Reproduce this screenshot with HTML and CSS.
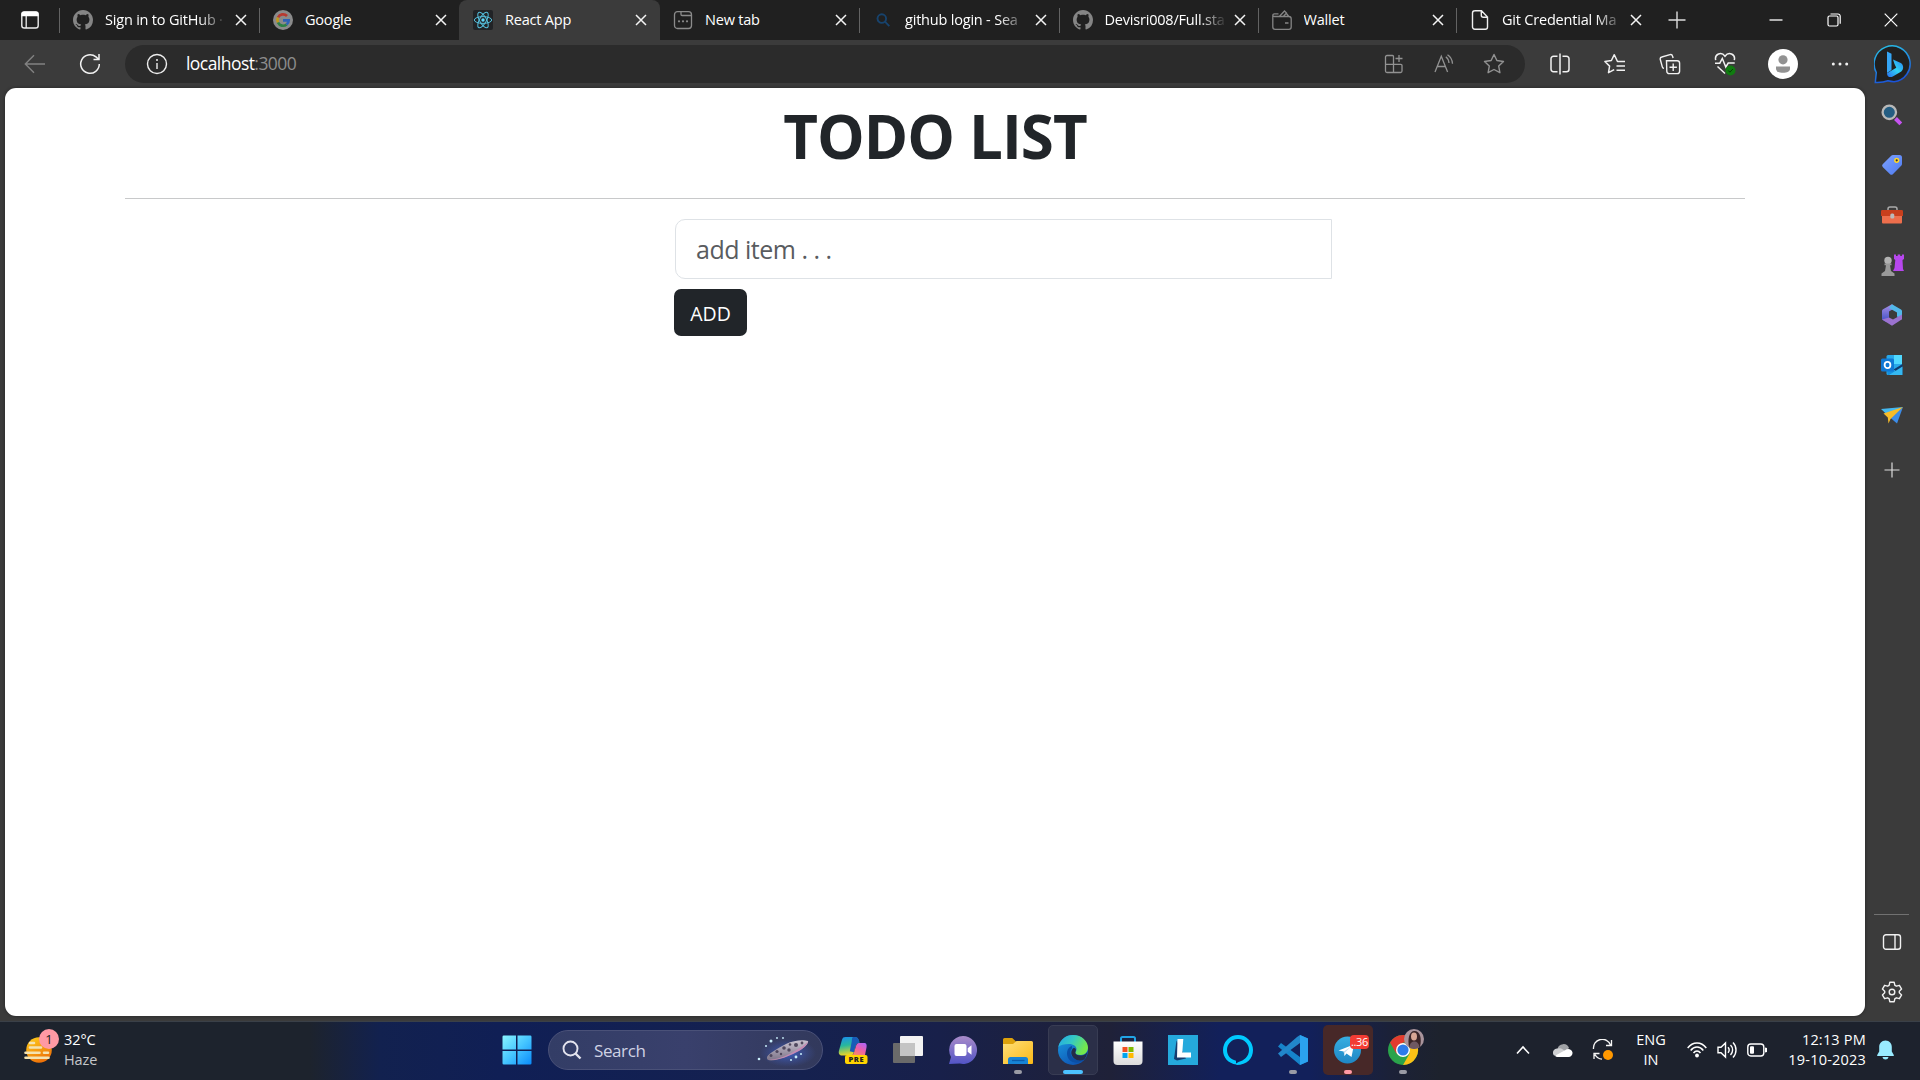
FILE: index.html
```html
<!DOCTYPE html>
<html lang="en">
<head>
<meta charset="utf-8">
<title>React App</title>
<link rel="stylesheet" href="styles.css">
</head>
<body>
<svg class="defs" aria-hidden="true">
  <defs>
    <linearGradient id="g-win" x1="0" y1="0" x2="1" y2="1"><stop offset="0" stop-color="#8af5ff"/><stop offset=".5" stop-color="#46c6ff"/><stop offset="1" stop-color="#0a8bfb"/></linearGradient>
    <linearGradient id="g-bing" x1="1" y1="0" x2="0" y2="1"><stop offset="0" stop-color="#2a7ff0"/><stop offset=".5" stop-color="#2fd3f5"/><stop offset="1" stop-color="#2a6df0"/></linearGradient>
    <linearGradient id="g-ring" x1="0.3" y1="0" x2="0.6" y2="1"><stop offset="0" stop-color="#27bce6"/><stop offset="1" stop-color="#1b50d8"/></linearGradient>
    <linearGradient id="g-tag" x1="0" y1="0" x2="1" y2="1"><stop offset="0" stop-color="#7ea2ff"/><stop offset="1" stop-color="#4d7af0"/></linearGradient>
    <linearGradient id="g-chat" x1="0" y1="0" x2="0" y2="1"><stop offset="0" stop-color="#a98bc9"/><stop offset="1" stop-color="#5254c6"/></linearGradient>
    <linearGradient id="g-folder" x1="0" y1="0" x2="1" y2="1"><stop offset="0" stop-color="#ffe07a"/><stop offset="1" stop-color="#fbb916"/></linearGradient>
    <linearGradient id="g-edge1" x1="0" y1="0" x2="1" y2="0.4"><stop offset="0" stop-color="#22a7e8"/><stop offset=".5" stop-color="#35c9c3"/><stop offset="1" stop-color="#74e84b"/></linearGradient>
    <linearGradient id="g-edge2" x1="0" y1="0" x2="0.6" y2="1"><stop offset="0" stop-color="#1b9de2"/><stop offset="1" stop-color="#0e55b4"/></linearGradient>
    <linearGradient id="g-sun" x1="0" y1="0" x2="0.5" y2="1"><stop offset="0" stop-color="#ffd21c"/><stop offset="1" stop-color="#ee7208"/></linearGradient>
    <linearGradient id="g-cop1" x1="0" y1="0" x2="0.2" y2="1"><stop offset="0" stop-color="#1a8df0"/><stop offset=".5" stop-color="#28b89c"/><stop offset="1" stop-color="#e9d52a"/></linearGradient>
    <linearGradient id="g-cop2" x1="0.8" y1="0" x2="0.2" y2="1"><stop offset="0" stop-color="#b264f3"/><stop offset=".5" stop-color="#ec5fa8"/><stop offset="1" stop-color="#f98a60"/></linearGradient>
    <linearGradient id="g-tel" x1="0" y1="0" x2="0" y2="1"><stop offset="0" stop-color="#37aee2"/><stop offset="1" stop-color="#1e86c4"/></linearGradient>
    <linearGradient id="g-365" x1="0" y1="0" x2="0" y2="1"><stop offset="0" stop-color="#a98fe6"/><stop offset="1" stop-color="#3c4fc4"/></linearGradient>
    <linearGradient id="g-ship" x1="0" y1="0" x2="0" y2="1"><stop offset="0" stop-color="#c9c3d0"/><stop offset="1" stop-color="#7d7488"/></linearGradient>
    <radialGradient id="g-glow"><stop offset="0" stop-color="#3f6ae0" stop-opacity=".75"/><stop offset="1" stop-color="#4560c0" stop-opacity="0"/></radialGradient>
    <linearGradient id="g-store" x1="0" y1="0" x2="0" y2="1"><stop offset="0" stop-color="#fff"/><stop offset="1" stop-color="#dcdcdc"/></linearGradient>
    <symbol id="x" viewBox="0 0 12 12"><path d="M1 1l10 10M11 1L1 11" fill="none" stroke="#f4f4f4" stroke-width="1.5"/></symbol>
    <symbol id="github" viewBox="0 0 16 16"><path fill="#858585" d="M8 0C3.58 0 0 3.58 0 8c0 3.54 2.29 6.53 5.47 7.59.4.07.55-.17.55-.38 0-.19-.01-.82-.01-1.49-2.01.37-2.53-.49-2.69-.94-.09-.23-.48-.94-.82-1.13-.28-.15-.68-.52-.01-.53.63-.01 1.08.58 1.23.82.72 1.21 1.87.87 2.33.66.07-.52.28-.87.51-1.07-1.78-.2-3.64-.89-3.64-3.95 0-.87.31-1.59.82-2.15-.08-.2-.36-1.02.08-2.12 0 0 .67-.21 2.2.82.64-.18 1.32-.27 2-.27s1.36.09 2 .27c1.53-1.04 2.2-.82 2.2-.82.44 1.1.16 1.92.08 2.12.51.56.82 1.27.82 2.15 0 3.07-1.87 3.75-3.65 3.95.29.25.54.73.54 1.48 0 1.07-.01 1.93-.01 2.2 0 .21.15.46.55.38A8.01 8.01 0 0 0 16 8c0-4.42-3.58-8-8-8z"/></symbol>
  </defs>
</svg>

<header class="tabstrip">
  <div class="tab-actions"><svg width="20" height="20" viewBox="0 0 20 20"><rect x="1.8" y="2" width="16.4" height="16" rx="2.6" fill="none" stroke="#eee" stroke-width="1.4"/><path d="M1.5 6.3V4A2.5 2.5 0 0 1 4 1.5h12A2.5 2.5 0 0 1 18.500 4v2.300z" fill="#fff"/><path d="M6.200 6v12" stroke="#eee" stroke-width="1.300"/></svg></div>
  <nav class="tabs">
    <div class="tab divided"><svg class="fav" viewBox="0 0 20 20"><use href="#github"/></svg><span class="tab-title fade">Sign in to GitHub ·</span><svg class="close"><use href="#x"/></svg></div>
    <div class="tab divided"><svg class="fav" viewBox="0 0 20 20"><circle cx="10" cy="10" r="10" fill="#8b8b8b"/><g fill="none" stroke-width="2.700"><path d="M14 6a5.600 5.600 0 0 0-9 1.500" stroke="#b83a31"/><path d="M5 7.500a5.600 5.600 0 0 0 0 5" stroke="#c19a1c"/><path d="M5 12.500a5.600 5.600 0 0 0 8.600 2" stroke="#2c8145"/><path d="M13.600 14.500c1.500-1.100 2.100-2.500 2.100-4.200H10" stroke="#2e62b8"/></g></svg><span class="tab-title">Google</span><svg class="close"><use href="#x"/></svg></div>
    <div class="tab active"><svg class="fav" viewBox="0 0 20 20"><rect width="20" height="20" rx="2" fill="#212326"/><g fill="none" stroke="#55bfdc" stroke-width="1"><ellipse cx="10" cy="10" rx="8.700" ry="3.400"/><ellipse cx="10" cy="10" rx="8.700" ry="3.400" transform="rotate(60 10 10)"/><ellipse cx="10" cy="10" rx="8.700" ry="3.400" transform="rotate(120 10 10)"/></g><circle cx="10" cy="10" r="1.700" fill="#61dafb"/></svg><span class="tab-title">React App</span><svg class="close"><use href="#x"/></svg></div>
    <div class="tab"><svg class="fav" viewBox="0 0 20 20"><g fill="none" stroke="#8b8b8b" stroke-width="1.300"><rect x="1.500" y="1.700" width="17" height="16.800" rx="3"/><path d="M8 2v2.500a1 1 0 0 0 1 1h9"/></g><g fill="#8b8b8b"><circle cx="6" cy="11.300" r="1.100"/><circle cx="10" cy="11.300" r="1.100"/><circle cx="14" cy="11.300" r="1.100"/></g></svg><span class="tab-title">New tab</span><svg class="close"><use href="#x"/></svg></div>
    <div class="tab divided"><svg class="fav" viewBox="0 0 20 20"><g fill="none" stroke="#17436d" stroke-width="1.900"><circle cx="8.800" cy="8.600" r="4.300"/><path d="M12 11.700l4.300 4.400"/></g></svg><span class="tab-title fade">github login - Sea</span><svg class="close"><use href="#x"/></svg></div>
    <div class="tab divided"><svg class="fav" viewBox="0 0 20 20"><use href="#github"/></svg><span class="tab-title fade">Devisri008/Full.sta</span><svg class="close"><use href="#x"/></svg></div>
    <div class="tab divided"><svg class="fav" viewBox="0 0 20 20"><g fill="none" stroke="#858585" stroke-width="1.300"><path d="M.8 5.500V17a2.300 2.300 0 0 0 2.300 2.300h13.800a2.300 2.300 0 0 0 2.300-2.300V8.800a2.300 2.300 0 0 0-2.300-2.300H2.500C.3 6.500.3 3.800 2.500 3.800h4M13 13h3.500M7.500 6.300l5-5.300 2 2-3 3.300M14 3l2.500 3"/></g></svg><span class="tab-title">Wallet</span><svg class="close"><use href="#x"/></svg></div>
    <div class="tab divided"><svg class="fav" viewBox="0 0 20 20"><path d="M4.500.8h7L17.500 7v10a2.200 2.200 0 0 1-2.200 2.200H4.700A2.200 2.200 0 0 1 2.500 17V3A2.200 2.200 0 0 1 4.700.8zM11.300 1v4.200c0 1.200.8 2 2 2h4" fill="none" stroke="#eee" stroke-width="1.400"/></svg><span class="tab-title fade">Git Credential Ma</span><svg class="close"><use href="#x"/></svg></div>
  </nav>
  <div class="new-tab"><svg width="18" height="18" viewBox="0 0 18 18"><path d="M9 .5v17M.5 9h17" stroke="#ddd" stroke-width="1.400"/></svg></div>
  <div class="window-controls">
    <div><svg width="14" height="14" viewBox="0 0 14 14"><path d="M.5 7h13" stroke="#fff" stroke-width="1.300"/></svg></div>
    <div><svg width="14" height="14" viewBox="0 0 14 14"><g fill="none" stroke="#fff" stroke-width="1.200"><rect x="1" y="3" width="10" height="10" rx="1.500"/><path d="M3.500 1h7.500A2.200 2.200 0 0 1 13.200 3.200v7.500"/></g></svg></div>
    <div><svg width="14" height="14" viewBox="0 0 14 14"><path d="M.7.7l12.600 12.600M13.300.7L.7 13.300" stroke="#fff" stroke-width="1.200"/></svg></div>
  </div>
</header>

<div class="toolbar">
  <div class="tool"><svg width="22" height="20" viewBox="0 0 22 20"><path d="M21 10H1.500M10 1.300L1.300 10l8.700 8.700" fill="none" stroke="#828282" stroke-width="1.400"/></svg></div>
  <div class="tool"><svg width="22" height="22" viewBox="0 0 22 22"><path d="M20.300 11A9.300 9.300 0 1 1 17 3.900l2.600 2.300M20 1v5.500h-5.500" fill="none" stroke="#f1f1f1" stroke-width="1.500"/></svg></div>
  <div class="address">
    <svg class="info" width="22" height="22" viewBox="0 0 22 22"><circle cx="11" cy="11" r="9.500" fill="none" stroke="#eee" stroke-width="1.400"/><path d="M11 10v6" stroke="#eee" stroke-width="1.400"/><circle cx="11" cy="7" r="1" fill="#eee"/></svg>
    <div class="url">localhost<span>:3000</span></div>
    <div class="pill-tool"><svg width="20" height="20" viewBox="0 0 20 20"><path d="M9.500 18.500V2.500a1 1 0 0 0-1-1H3a1.500 1.500 0 0 0-1.500 1.500v14A1.500 1.500 0 0 0 3 18.500h13.500A1.500 1.500 0 0 0 18 17v-5.500a1.200 1.200 0 0 0-1.200-1.200H1.500M15 1v7M11.500 4.500h7" fill="none" stroke="#929292" stroke-width="1.300"/></svg></div>
    <div class="pill-tool"><svg width="20" height="20" viewBox="0 0 20 20"><path d="M1 18L7.300 2.300 13.600 18M3.200 12.500h8.200M11.800 2.700c2 1.500 3 3.700 3.200 6.300M13.500.8c3 2 4.800 5 5 9" fill="none" stroke="#929292" stroke-width="1.300"/></svg></div>
    <div class="pill-tool"><svg width="22" height="22" viewBox="0 0 22 22"><path d="M11 1.500l2.900 6 6.600 1-4.800 4.600 1.200 6.600-5.900-3.200-5.900 3.200 1.200-6.600L1.500 8.500l6.600-1z" fill="none" stroke="#929292" stroke-width="1.400" stroke-linejoin="round"/></svg></div>
  </div>
  <div class="tool"><svg width="20" height="22" viewBox="0 0 20 22"><path d="M10 .5v21M7.500 3.200h-4A2.500 2.500 0 0 0 1 5.700v10.600a2.500 2.500 0 0 0 2.500 2.500h4M12.500 3.200h4A2.500 2.500 0 0 1 19 5.700v10.600a2.500 2.500 0 0 1-2.500 2.500h-4" fill="none" stroke="#f1f1f1" stroke-width="1.500"/></svg></div>
  <div class="tool"><svg width="22" height="22" viewBox="0 0 22 22"><path d="M21 8.500h-7.500L10.300 1.700 7.400 7.500.9 8.500l4.700 4.600-1.100 6.600 5.700-3M12.500 13H21M12.500 17.300H21" fill="none" stroke="#f1f1f1" stroke-width="1.500" stroke-linejoin="round"/></svg></div>
  <div class="tool"><svg width="22" height="22" viewBox="0 0 22 22"><path d="M7.500 7.800h10.700a2.400 2.400 0 0 1 2.400 2.400v8a2.400 2.400 0 0 1-2.400 2.400h-8a2.400 2.400 0 0 1-2.400-2.400zM14.200 10.500v7.400M10.500 14.200h7.400M5 15.300c-.9 0-1.500-.5-1.700-1.400L1.300 6.500c-.3-1.200.3-2.200 1.500-2.500L11 1.600c1.200-.3 2.200.2 2.500 1.400l.6 2" fill="none" stroke="#f1f1f1" stroke-width="1.400"/></svg></div>
  <div class="tool"><svg width="22" height="24" viewBox="0 0 22 24"><path d="M1.700 8.200C.2 1.700 7.500-.5 11 4.200 14.500-.5 21.800 1.700 20.300 8.200M1 11.200h4.800l2.500-4.700 3.500 8.500 2.400-4h6.500M3.500 14.500l7.500 7" fill="none" stroke="#f1f1f1" stroke-width="1.500"/><circle cx="16.500" cy="18.500" r="5" fill="#107c10"/><path d="M14.300 18.500l1.600 1.700 3-3.200" fill="none" stroke="#063c06" stroke-width="1"/></svg></div>
  <div class="tool avatar-cell"><svg width="30" height="30" viewBox="0 0 30 30"><circle cx="15" cy="15" r="15" fill="#fff"/><circle cx="15" cy="10.800" r="4.600" fill="#929292"/><path d="M8 17.500h14v2.200c0 2.800-3 4-7 4s-7-1.200-7-4z" fill="#929292"/></svg></div>
  <div class="tool dots"><svg width="18" height="6" viewBox="0 0 18 6"><g fill="#f1f1f1"><circle cx="2.300" cy="3" r="1.500"/><circle cx="9" cy="3" r="1.500"/><circle cx="15.700" cy="3" r="1.500"/></g></svg></div>
  <div class="tool bing"><svg width="40" height="40" viewBox="0 0 40 40"><path d="M1.300 38.500l1-10A18 18 0 1 1 20 37.800a40 40 0 0 1-6-1c-4 1.600-8 1.900-12.700 1.700z" fill="#202020" stroke="url(#g-ring)" stroke-width="1.500"/><path d="M13 7.500l4.500 2.300V26L13 29z" fill="#35a5f5"/><path d="M19 15.500l7.800 3.500c3 2 3.200 6 .5 8.500l-8.500 5c-2.800 1.400-5.800.3-5.800-3.300l9.300-5.500-1.800-3.700z" fill="url(#g-bing)"/></svg></div>
</div>

<main class="browser-body">
  <section class="page">
    <div class="container">
      <h1>TODO LIST</h1>
      <hr>
      <form class="todo-form">
        <input type="text" placeholder="add item . . .">
        <button type="button">ADD</button>
      </form>
    </div>
  </section>
  <aside class="sidebar">
    <div class="side-item"><svg width="22" height="22" viewBox="0 0 22 22"><path d="M14.500 14.500l5.300 5.300" stroke="#c653f0" stroke-width="4"/><circle cx="8.300" cy="8.300" r="6.700" fill="#245d82" stroke="#b8b8b8" stroke-width="2.300"/></svg></div>
    <div class="side-item"><svg width="22" height="22" viewBox="0 0 22 22"><path d="M12 1h6.500A2.500 2.500 0 0 1 21 3.500V10c0 .7-.3 1.300-.8 1.800l-8.400 8.400a2 2 0 0 1-2.700 0L1.700 13a2 2 0 0 1 0-2.700l8.500-8.500c.5-.5 1.100-.8 1.800-.8z" fill="url(#g-tag)"/><circle cx="15.700" cy="6.300" r="2.600" fill="#ffd629"/><circle cx="15.700" cy="6.300" r="1.100" fill="#333"/></svg></div>
    <div class="side-item"><svg width="22" height="20" viewBox="0 0 22 20"><path d="M7 6V4a2 2 0 0 1 2-2h5a2 2 0 0 1 2 2v2" fill="none" stroke="#aaa" stroke-width="1.500"/><rect x="1" y="9" width="20" height="9.500" rx="1" fill="#ed6e4c"/><path d="M0 6.500C0 5.500.5 5 1.500 5h19c1 0 1.500.5 1.500 1.500V11H0z" fill="#c83f1d"/><rect x="9.300" y="8.500" width="4" height="5" rx="1.500" fill="#bbb"/></svg></div>
    <div class="side-item"><svg width="24" height="24" viewBox="0 0 24 24"><path d="M14 1.500h2V3h1.700V1.500h2.500V3h1.700V1.500H24V6l-1.500 1 .5 9 1 2H13l1.500-3 .8-8L14 6z" fill="#b747ee"/><circle cx="8" cy="7.500" r="3.700" fill="#b2b2b2"/><path d="M4.500 10.500h7v1.700H10l1 5.800 3.500 2.500V23H1.500v-2.500L5 18l1-5.800H4.500z" fill="#999"/></svg></div>
    <div class="side-item"><svg width="22" height="24" viewBox="0 0 22 24"><path d="M11 1.200L2 6.300A2 2 0 0 0 1 8v8.500l4 2.500 3-4V8.500l6-3.600z" fill="url(#g-365)"/><path d="M11 1.200l9 5.200a2 2 0 0 1 1 1.700v8.400l-5-3V9.500L8 5z" fill="#52b8ea"/><path d="M1 16.500l7-2 4 2 9-5v4.700L11 22.800z" fill="#9b72cf"/></svg></div>
    <div class="side-item"><svg width="22" height="22" viewBox="0 0 22 22"><rect x="5.500" y="1" width="15.500" height="20" rx="1.500" fill="#28a8ea"/><path d="M13 1h8v9h-8z" fill="#50d9ff"/><path d="M5 12l8.500 5L21 21H7z" fill="#1490df"/><path d="M21.500 10v11l-9-5.500z" fill="#123b6d"/><path d="M21.500 12.500V21H8z" fill="#35b8f1"/><rect x="0" y="4.500" width="13" height="13" rx="1.500" fill="#0f78d4"/><ellipse cx="6.500" cy="11" rx="2.900" ry="3.200" fill="none" stroke="#fff" stroke-width="1.800"/></svg></div>
    <div class="side-item"><svg width="24" height="20" viewBox="0 0 24 20"><path d="M1 4L23 2 8.500 11z" fill="#44b8f0"/><path d="M23 2L17 18.500l-7-6z" fill="#3c8ce8"/><path d="M23 2L3.500 8.500l4.300 4 .7 6 2-4.500z" fill="#f7bc29"/></svg></div>
    <div class="side-item add"><svg width="16" height="16" viewBox="0 0 16 16"><path d="M8 .5v15M.5 8h15" stroke="#ddd" stroke-width="1.200"/></svg></div>
    <div class="side-bottom">
      <div class="side-item"><svg width="20" height="20" viewBox="0 0 20 20"><path d="M4 2.800h12A2.500 2.500 0 0 1 18.500 5.300v9.400a2.500 2.500 0 0 1-2.500 2.500H4a2.500 2.500 0 0 1-2.500-2.500V5.300A2.500 2.500 0 0 1 4 2.800zM13 3v14" fill="none" stroke="#f1f1f1" stroke-width="1.400"/></svg></div>
      <div class="side-item"><svg width="22" height="22" viewBox="0 0 22 22"><path d="M8.800 1.300h4.400l.7 3 1.500.9 3-.9 2.200 3.800-2.300 2.100v1.600l2.300 2.100-2.200 3.800-3-.9-1.500.9-.7 3H8.800l-.7-3-1.500-.9-3 .9-2.200-3.800 2.300-2.100v-1.600L1.400 8.100l2.200-3.800 3 .9 1.500-.9z" fill="none" stroke="#f1f1f1" stroke-width="1.400" stroke-linejoin="round"/><circle cx="11" cy="11" r="2.800" fill="none" stroke="#f1f1f1" stroke-width="1.400"/></svg></div>
    </div>
  </aside>
</main>

<footer class="taskbar">
  <div class="weather">
    <div class="weather-icon"><svg width="32" height="32" viewBox="0 0 32 32"><circle cx="15" cy="16" r="12.800" fill="url(#g-sun)"/><path d="M6 9h4M6 13.500h11M1.500 18.700h14M20 18.700h4M1.500 23.700h23" stroke="#f4e3b1" stroke-width="2.600" stroke-linecap="round"/></svg><span class="weather-badge">1</span></div>
    <div class="weather-text">32°C<br><span>Haze</span></div>
  </div>
  <div class="apps">
    <div class="app"><svg width="30" height="30" viewBox="0 0 30 30"><path d="M1.800.5H14v14H.500V1.800A1.300 1.300 0 0 1 1.800.5zM15.500.5h12.700a1.300 1.300 0 0 1 1.300 1.300v12.700h-14zM.5 16H14v13.500H1.800a1.300 1.300 0 0 1-1.300-1.300zM15.500 16h14v12.200a1.300 1.300 0 0 1-1.300 1.300H15.500z" fill="url(#g-win)"/></svg></div>
    <div class="search"><svg class="search-icon" width="20" height="20" viewBox="0 0 20 20"><circle cx="8.500" cy="8.500" r="7" fill="none" stroke="#e3e3ee" stroke-width="1.900"/><path d="M13.500 13.500l5 5" stroke="#e3e3ee" stroke-width="2.400"/></svg><span>Search</span>
      <svg width="62" height="34" viewBox="0 0 62 34"><ellipse cx="34" cy="20" rx="28" ry="14" fill="url(#g-glow)"/><path d="M13 24c2-4 10-8 19-13 8-4.200 18-4.500 22-3 1 2-3 7-12 11-8 4-18 8.500-25 8.500-3 0-4.500-1-4-3.500z" fill="url(#g-ship)"/><path d="M14 26.500c7 .5 16-2 26-8 6-3.300 10-6 14-10-1 3.500-5 8-12 11-9 4.500-20 9-28 7z" fill="#c38bb4"/><g fill="#50485e"><circle cx="17" cy="22.500" r="1.500"/><circle cx="23" cy="18.500" r="1.600"/><circle cx="30" cy="15" r="1.800"/><circle cx="36" cy="11.500" r="1.300"/><circle cx="35" cy="17" r="1.700"/><circle cx="42" cy="12" r="2"/><circle cx="48" cy="10" r="1.400"/><circle cx="27" cy="21" r="1.200"/></g><g fill="#c9eefb"><circle cx="17" cy="8" r="1.500"/><circle cx="12" cy="13" r="1"/><circle cx="5" cy="26" r="1.300"/><circle cx="42" cy="24" r="1.400"/><circle cx="37" cy="27" r="1"/><circle cx="47" cy="21" r="1"/><circle cx="23" cy="5" r=".9"/><circle cx="29" cy="5" r=".9"/></g></svg>
    </div>
    <div class="app"><svg width="30" height="30" viewBox="0 0 30 30"><path d="M7.500 2h9c2.500 0 3.500 1 4.200 3l.8 2.500c-2 0-3 .8-3.700 2.800l-2.300 8.200c-.7 1.700-1.700 2-3.500 2H4c-3 0-3.700-2.500-3-5L4 4.800C4.700 2.700 5.500 2 7.500 2z" fill="url(#g-cop1)"/><path d="M15 2h1.500c2.500 0 3.500 1 4.200 3l.8 2.500c-2 0-3 .8-3.700 2.800l-2 7-4-1 2-10C14 4 14 2.500 15 2z" fill="#185bb8"/><path d="M21 8h5c2.500 0 3 2 2.500 4.500L27 20H13.500c1.500 0 2-1 2.500-2.500L18 11c.5-2 1.500-3 3-3z" fill="url(#g-cop2)"/><rect x="7" y="20" width="22.500" height="9" rx="2" fill="#ffd400"/><text x="18.300" y="27.300" class="pre">PRE</text></svg></div>
    <div class="app"><svg width="30" height="30" viewBox="0 0 30 30"><rect x="0" y="8" width="22" height="20" rx="1" fill="#6a6a6a"/><rect x="7" y="1" width="23" height="20" rx="1" fill="#f3f3f3"/><rect x="7" y="8" width="15" height="13" fill="#c4c4c4"/></svg></div>
    <div class="app"><svg width="30" height="30" viewBox="0 0 30 30"><path d="M15 1a14 14 0 1 1-3.300 27.600L1 29l2-7A14 14 0 0 1 15 1z" fill="url(#g-chat)"/><rect x="6.500" y="9" width="12" height="12" rx="2" fill="#fff"/><path d="M19.700 13.300l3.800-3v9.400l-3.800-3z" fill="#fff"/></svg></div>
    <div class="app running"><svg width="30" height="30" viewBox="0 0 30 30"><path d="M0 4.500A1.500 1.500 0 0 1 1.500 3h7.700L13 6.500V10H0z" fill="#dda10b"/><path d="M0 9h10l3.500-3h15A1.500 1.500 0 0 1 30 7.500V28a1 1 0 0 1-1 1H0z" fill="url(#g-folder)"/><path d="M5 29v-4.500A2.500 2.500 0 0 1 7.500 22h15a2.500 2.500 0 0 1 2.500 2.500V29z" fill="#1784d6"/><path d="M9 25.500h12.500" stroke="#0b5cab" stroke-width="1.300"/></svg></div>
    <div class="app selected"><svg width="30" height="30" viewBox="0 0 30 30"><circle cx="15" cy="15" r="15" fill="url(#g-edge2)"/><path d="M.3 12C2 4.500 8 0 15 0c9 0 15 6.500 15 12.500 0 4.500-3 7.500-7.200 7.500-3.500 0-5.500-1-5.500-2.300 0-1.200 1.200-1.200 1.200-3.700 0-2.500-3-5-7.500-5C6 9 2 10 .3 12z" fill="url(#g-edge1)"/><path d="M14 11c-5 1-7 9-2.500 14 4 3.800 11 3.500 14.800-.5-5 2-13 .3-13.800-6.500-.2-2 .3-3.500 1.500-4.500z" fill="#0b4fa5"/><path d="M17.300 17.500c0 2 3 3.500 6.500 3 3-.5 4.500-2 5.500-3.500a15 15 0 0 1-3 7.500c-6 2.500-12-.5-13-6-.3-2.500 1-4.500 2-5.300 1.500-.5 3 .5 2.500 2.300z" fill="#242c48"/></svg></div>
    <div class="app"><svg width="30" height="30" viewBox="0 0 30 30"><path d="M8 7V3.500C8 2.500 8.500 2 9.500 2h11c1 0 1.500.5 1.500 1.500V7" fill="none" stroke="#21a4e5" stroke-width="2"/><path d="M.5 6.500h29V26a4 4 0 0 1-4 4h-21a4 4 0 0 1-4-4z" fill="url(#g-store)"/><path d="M9.500 12h5v5h-5z" fill="#f25022"/><path d="M15.500 12h5v5h-5z" fill="#7fba00"/><path d="M9.500 18h5v5h-5z" fill="#00a4ef"/><path d="M15.500 18h5v5h-5z" fill="#ffb900"/></svg></div>
    <div class="app"><svg width="30" height="30" viewBox="0 0 30 30"><path d="M0 0h30v30H0z" fill="#25a9dc"/><path d="M8.500 5.500L6 24l3 1.500 9-2z" fill="#173d70"/><path d="M9.500 4h5.800l-1 13.500h8.700v5H9z" fill="#fff"/></svg></div>
    <div class="app"><svg width="30" height="30" viewBox="0 0 30 30"><path d="M13 28.500v-2.700c-5-1-9-4.500-9-10.300A11 11 0 0 1 26 15c0 7-5.500 11.500-12.500 14.500C5 28.500 0 22.500 0 15a15 15 0 1 1 30 0c0 8.500-6 15-16.500 15z" fill="#00caff"/><path d="M13 28.500v-2.800C7.500 24.500 4 20.500 4 15a11 11 0 0 1 22 0c0 6.500-5 10.500-10.500 12z" fill="#13215a"/></svg></div>
    <div class="app running"><svg width="30" height="30" viewBox="0 0 30 30"><path d="M22 0l8 3.500v23L22 30 0 11.500 3 8l19 14z" fill="#1683ca"/><path d="M22 0l-3 2L0 18.500 3 22 22 8z" fill="#2286ca"/><path d="M22 0l8 3.500v23L22 30z" fill="#2ba2ef"/></svg></div>
    <div class="app running alert"><svg width="30" height="30" viewBox="0 0 30 30"><circle cx="14.500" cy="15" r="13.500" fill="url(#g-tel)"/><path d="M5.500 15.500L21 9.500 18.500 22l-5-3.500-2 2.500-.8-4.500z" fill="#fff"/><path d="M10.700 16.500l7.500-5-6 5.800-.7 3.700z" fill="#c5dff0"/></svg><span class="count">..36</span></div>
    <div class="app running"><svg width="38" height="38" viewBox="0 0 38 38"><g transform="translate(4 4)"><circle cx="15" cy="15" r="15" fill="#2aa34b"/><path d="M2 7.500A15 15 0 0 1 28 7.500H15L8.500 18.700z" fill="#e33b2e"/><path d="M28 7.500A15 15 0 0 1 15 30l6.500-11.300V7.500z" fill="#fbc116"/><circle cx="15" cy="15" r="7" fill="#fff"/><circle cx="15" cy="15" r="5.600" fill="#2c7bea"/></g></svg>
      <svg class="profile" width="20" height="20" viewBox="0 0 20 20"><circle cx="10" cy="10" r="10" fill="#a9949c"/><path d="M5 18C3.500 10 5 2 10.500 2s7.500 7 5.500 16z" fill="#3a2528"/><ellipse cx="10" cy="7.500" rx="3" ry="4" fill="#d8a694"/><path d="M5 18.500c1-4.500 3-6 5.500-6s4.500 2 5 5.800a10 10 0 0 1-10.500.2z" fill="#6e5861"/></svg></div>
  </div>
  <div class="tray">
    <div class="tray-item"><svg width="14" height="10" viewBox="0 0 14 10"><path d="M1 8.500L7 2l6 6.500" fill="none" stroke="#fff" stroke-width="1.600"/></svg></div>
    <div class="tray-item"><svg width="20" height="14" viewBox="0 0 20 14"><path d="M4.500 6a6 6 0 0 1 11.500-1l-5 5z" fill="#a0a2a6"/><path d="M1 12.500A4.300 4.300 0 0 1 5 5.500c3-1 5 1 7 2.500l-2 5z" fill="#cfd0d2"/><path d="M2 12.700L12.500 7c2-2 6.500-1 7 2.500.3 2.500-1.500 4.500-4 4.500H4.500A3 3 0 0 1 2 12.700z" fill="#fff"/></svg></div>
    <div class="tray-item"><svg width="22" height="22" viewBox="0 0 22 22"><path d="M1.500 10A8.800 8.800 0 0 1 18.500 6M19.500 1v5.500H14M2 20v-5.500h5.500M3 15.500c1.500 3 4 4.500 7 4.700" fill="none" stroke="#f5f5f5" stroke-width="1.300"/><circle cx="16" cy="16" r="5" fill="#ff9800"/></svg></div>
    <div class="language">ENG<br>IN</div>
    <div class="status"><svg width="20" height="18" viewBox="0 0 20 18"><g fill="none" stroke="#fff" stroke-width="1.500"><path d="M.7 7c5-6.700 13.600-6.700 18.600 0M3.700 9.500c3.500-4.600 9.100-4.600 12.600 0M6.500 12c2-2.700 5-2.700 7 0"/></g><circle cx="10" cy="14.500" r="1.900" fill="#fff"/></svg></div>
    <div class="status"><svg width="20" height="18" viewBox="0 0 20 18"><path d="M1 6.300h3L8.500 2v14L4 11.700H1zM11 6.300c1.300 1.500 1.300 4 0 5.500M13.500 4c2.800 2.700 2.800 7.300 0 10M16 1.500c4 4 4 11 0 15" fill="none" stroke="#fff" stroke-width="1.400"/></svg></div>
    <div class="status"><svg width="20" height="14" viewBox="0 0 20 14"><rect x=".8" y="1" width="16" height="12" rx="3" fill="none" stroke="#fff" stroke-width="1.400"/><rect x="3" y="3.300" width="4" height="7.400" rx="1" fill="#fff"/><path d="M18 4.500l2 .5v4l-2 .5z" fill="#fff"/></svg></div>
    <div class="clock">12:13 PM<br>19-10-2023</div>
    <div class="bell"><svg width="17" height="20" viewBox="0 0 17 20"><path d="M8.500.5c4 0 6.300 3 6.300 6.500v4.500l2 3.500c.2.600 0 1-.6 1H.800c-.6 0-.8-.4-.6-1l2-3.500V7C2.200 3.500 4.500.5 8.500.5zM5.500 17h6c-.3 1.700-1.500 2.500-3 2.500S5.800 18.700 5.500 17z" fill="#99ebff"/></svg></div>
  </div>
</footer>
</body>
</html>
```
FILE: styles.css
```css
* { box-sizing: border-box; }

body {
  margin: 0;
  width: 1920px;
  height: 1080px;
  overflow: hidden;
  display: flex;
  flex-direction: column;
  background: #3b3b3b;
  color: #fff;
  font-family: "Open Sans", "Noto Sans", sans-serif;
}

svg { display: block; flex: none; }
.defs { position: absolute; width: 0; height: 0; }

/* Tab strip */
.tabstrip { height: 40px; display: flex; background: #202020; flex: none; }
.tab-actions { width: 59px; display: flex; align-items: center; justify-content: center; }
.tabs { display: grid; grid-template-columns: 200px 200px 200px 200px 199.500px 199px 198.500px 198px; }
.tab { display: flex; align-items: center; padding: 0 12px 0 14px; min-width: 0; }
.divided { background: linear-gradient(#636363, #636363) 0 8px / 1px 25px no-repeat; }
.active { background: #3b3b3b; border-radius: 8px 8px 0 0; margin-right: -1px; }
.fav { width: 20px; height: 20px; }
.tab-title {
  margin-left: 12px;
  width: 124px;
  overflow: hidden;
  white-space: nowrap;
  font-size: 14.500px;
  letter-spacing: -0.2px;
  line-height: 20px;
}
.fade { -webkit-mask-image: linear-gradient(90deg, #000 94px, transparent 122px); mask-image: linear-gradient(90deg, #000 94px, transparent 122px); }
.close { width: 12px; height: 12px; margin-left: 6px; }
.new-tab { width: 46px; display: flex; align-items: center; justify-content: center; }
.window-controls { margin-left: auto; display: flex; }
.window-controls div { width: 57.500px; display: flex; align-items: center; justify-content: center; }

/* Toolbar */
.toolbar { height: 48px; padding-left: 7px; display: flex; align-items: center; flex: none; }
.tool { width: 55px; display: flex; align-items: center; justify-content: center; }
.address { width: 1400px; height: 38px; margin: 0 7px 0 8px; padding: 0 6px 0 21px; display: flex; align-items: center; border-radius: 19px; background: #2b2b2b; }
.url { margin: -2px auto 0 18px; font-size: 17.500px; letter-spacing: -0.55px; line-height: 24px; }
.url span { color: #8d8d8d; }
.pill-tool { width: 50px; display: flex; justify-content: center; }
.avatar-cell { width: 61px; }
.dots { width: 54px; }
.bing { width: 53px; }

/* Page and sidebar */
.browser-body { flex: 1; display: flex; padding: 0 0 5px 5px; min-height: 0; }
.page { width: 1860px; border-radius: 11px; background: #fff; color: #212529; box-shadow: 0 0 3px #222; }
.container { width: 1620px; margin: 0 auto; padding-top: 12px; }
h1 { margin: 0; text-align: center; font-size: 60px; line-height: 72px; font-weight: 700; letter-spacing: -0.9px; }
hr { margin: 26px 0 20px; border: 0; border-top: 1px solid #c8c9ca; }
.todo-form { width: 658px; margin-left: 549px; display: flex; flex-direction: column; align-items: flex-start; gap: 10px; }
.todo-form input { width: 657px; height: 60px; margin-left: 1px; padding: 0 20px; border: 1px solid #dee2e6; border-radius: 10px 0 0 10px; font: 25px "Open Sans", "Noto Sans", sans-serif; letter-spacing: -0.500px; }
.todo-form input::placeholder { color: #595c5f; opacity: 1; }
.todo-form button { width: 73px; height: 47px; padding: 1px 0 0; border: 0; border-radius: 7px; background: #212529; color: #fff; font: 19.500px "Open Sans", "Noto Sans", sans-serif; }
.sidebar { flex: 1; display: flex; flex-direction: column; align-items: center; padding: 2px 2px 0 0; }
.side-item { height: 50px; display: flex; align-items: center; justify-content: center; }
.add { margin-top: 5px; }
.side-bottom { width: 35px; margin: auto 0 -1px; padding-top: 2px; border-top: 1px solid #717171; }

/* Taskbar */
.taskbar {
  height: 59px;
  flex: none;
  display: grid;
  grid-template-columns: 492px 1fr 420px;
  align-items: center;
  padding-bottom: 1px;
  box-shadow: inset 0 1px #3a4048;
  background: linear-gradient(90deg, #1d232d 0, #1d232d 310px, #12214f 380px, #101f55 500px, #15214f 800px, #18204a 940px, #1f2138 1110px, #12205a 1220px, #12205a 1310px, #1b2138 1390px, #1d222d 1440px);
}
.weather { display: flex; align-items: center; padding-left: 24px; gap: 8px; }
.weather-icon { position: relative; }
.weather-badge { position: absolute; left: 15px; top: -5px; width: 20px; height: 20px; border-radius: 50%; background: #ff99a4; color: #222; font-size: 13px; line-height: 20px; text-align: center; }
.weather-text { font-size: 14.500px; line-height: 20px; letter-spacing: -0.1px; }
.weather-text span { color: #c5c7ca; }
.apps { display: flex; align-items: center; gap: 5px; }
.app { position: relative; width: 50px; height: 50px; display: flex; align-items: center; justify-content: center; border-radius: 5px; }
.search { width: 275px; height: 40px; margin: 0 0 0 1px; padding: 0 6px 0 13px; display: flex; align-items: center; border: 1px solid #4a5178; border-radius: 20px; background: linear-gradient(90deg, #333d66, #39406c 50%, #32395c); color: #cfd2e4; font-size: 17px; letter-spacing: -0.400px; }
.search span { margin: 0 auto 0 12px; }
.pre { fill: #222; font: 800 7.500px "Open Sans", sans-serif; text-anchor: middle; letter-spacing: 0.500px; }
.running::after, .selected::after { content: ""; position: absolute; bottom: 1px; left: 21px; width: 8px; height: 4px; border-radius: 2px; background: #9a9ba5; }
.selected { background: #2b2f48; border: 1px solid #383c53; }
.selected::after { left: 14px; bottom: 0; width: 20px; background: #4cc2ff; }
.alert { background: #472828; }
.alert::after { background: #ff99a4; }
.count { position: absolute; top: 10px; left: 27px; height: 14px; width: 19px; border-radius: 4px; background: #f23c34; font-size: 11px; line-height: 14px; text-align: center; letter-spacing: -0.300px; }
.profile { position: absolute; left: 26px; top: 4px; }
.tray { display: flex; align-items: center; padding-left: 3px; }
.tray-item { width: 40px; display: flex; justify-content: center; }
.language { width: 56px; font-size: 14.500px; line-height: 20px; text-align: center; }
.status { width: 30px; display: flex; justify-content: center; }
.status svg { margin-left: 6px; }
.clock { width: 97px; font-size: 14.500px; line-height: 20px; text-align: right; letter-spacing: 0.200px; }
.bell { margin-left: 11px; }
```
